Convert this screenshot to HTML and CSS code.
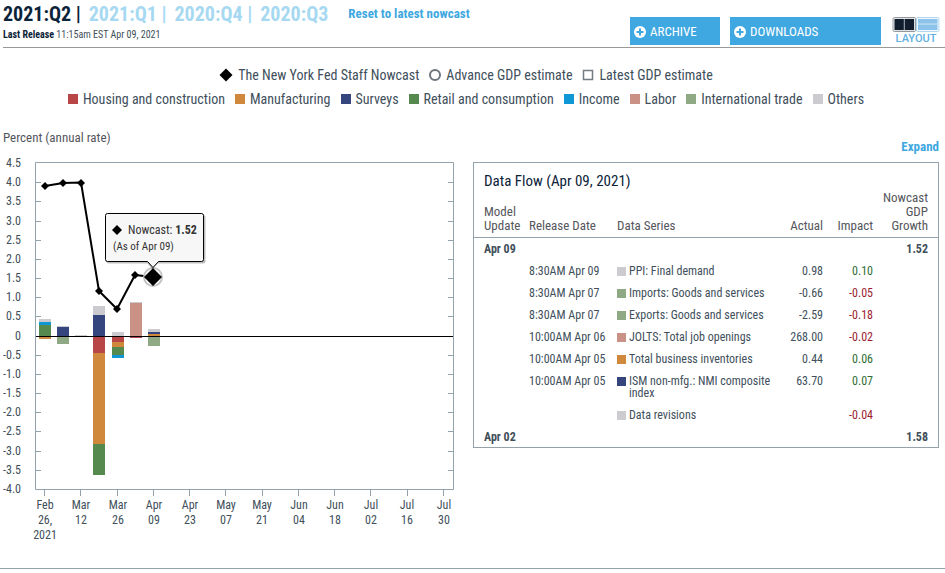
FILE: index.html
```html
<!DOCTYPE html>
<html lang="en">
<head>
<meta charset="utf-8">
<meta name="viewport" content="width=device-width, initial-scale=1">
<title>Nowcasting Report</title>
<link rel="stylesheet" href="styles.css">
</head>
<body>
<main class="report">
  <header class="top">
    <div class="heading">
      <nav class="quarters">
        <a class="quarter current" href="#q2">2021:Q2 |</a>
        <a class="quarter" href="#q1">2021:Q1 |</a>
        <a class="quarter" href="#q4">2020:Q4 |</a>
        <a class="quarter" href="#q3">2020:Q3</a>
        <a class="reset" href="#latest">Reset to latest nowcast</a>
      </nav>
      <p class="release"><strong>Last Release</strong> 11:15am EST Apr 09, 2021</p>
    </div>
    <div class="actions">
      <button class="action archive" type="button">
        <svg class="plus" viewBox="0 0 12 12" aria-hidden="true"><circle cx="6" cy="6" r="6" fill="#fff"/><path d="M6 2.5v7M2.5 6h7" stroke="#40a8e0" stroke-width="2"/></svg>
        ARCHIVE
      </button>
      <button class="action downloads" type="button">
        <svg class="plus" viewBox="0 0 12 12" aria-hidden="true"><circle cx="6" cy="6" r="6" fill="#fff"/><path d="M6 2.5v7M2.5 6h7" stroke="#40a8e0" stroke-width="2"/></svg>
        DOWNLOADS
      </button>
      <button class="layout" type="button">
        <svg class="layout-icon" viewBox="0 0 50 16" aria-hidden="true">
          <rect x=".5" y=".5" width="24" height="15" rx="1.5" fill="#fff" stroke="#8a8f94"/>
          <rect x="2" y="2" width="21" height="12" fill="#121e2d"/>
          <path d="M12.5 2v12" stroke="#b9bfc5"/>
          <rect x="25.5" y=".5" width="24" height="15" rx="1.5" fill="#fff" stroke="#a9d2f0"/>
          <rect x="27" y="2" width="21" height="12" fill="#8cc3eb"/>
          <path d="M27 7.5h21" stroke="#d5e9f8"/>
        </svg>
        LAYOUT
      </button>
    </div>
  </header>

  <div class="legend">
    <ul class="legend-row">
      <li><svg class="mark diamond" viewBox="0 0 14 14" aria-hidden="true"><path d="M7 .5 13.5 7 7 13.5.5 7z"/></svg>The New York Fed Staff Nowcast</li>
      <li><svg class="mark" viewBox="0 0 12 12" aria-hidden="true"><circle cx="6" cy="6" r="5" fill="#fff" stroke="#6d757d" stroke-width="2"/></svg>Advance GDP estimate</li>
      <li><svg class="mark" viewBox="0 0 12 12" aria-hidden="true"><path d="M1.5 1.5h9v9h-9z" fill="#fff" stroke="#737b83" stroke-width="1.5"/></svg>Latest GDP estimate</li>
    </ul>
    <ul class="legend-row">
      <li><span class="swatch housing"></span>Housing and construction</li>
      <li><span class="swatch manufacturing"></span>Manufacturing</li>
      <li><span class="swatch surveys"></span>Surveys</li>
      <li><span class="swatch retail"></span>Retail and consumption</li>
      <li><span class="swatch income"></span>Income</li>
      <li><span class="swatch labor"></span>Labor</li>
      <li><span class="swatch trade"></span>International trade</li>
      <li><span class="swatch others"></span>Others</li>
    </ul>
  </div>

  <div class="panels">
    <section class="chart-panel">
      <p class="axis-title">Percent (annual rate)</p>
      <svg class="chart" viewBox="3 155 452 390" role="img" aria-label="Nowcast by week with contributions">
        <g class="frame">
          <path d="M35.5 162.5h418v327h-418z"/>
          <path d="M36 182.5h5M36 201.5h5M36 221.5h5M36 240.5h5M36 259.5h5M36 278.5h5M36 297.5h5M36 316.5h5M36 355.5h5M36 374.5h5M36 393.5h5M36 412.5h5M36 431.5h5M36 451.5h5M36 470.5h5"/>
          <path d="M448 182.5h5M448 201.5h5M448 221.5h5M448 240.5h5M448 259.5h5M448 278.5h5M448 297.5h5M448 316.5h5M448 355.5h5M448 374.5h5M448 393.5h5M448 412.5h5M448 431.5h5M448 451.5h5M448 470.5h5"/>
          <path d="M44.5 490v6M80.5 490v6M117.5 490v6M153.5 490v6M189.5 490v6M225.5 490v6M262.5 490v6M298.5 490v6M334.5 490v6M370.5 490v6M407.5 490v6M443.5 490v6"/>
        </g>
        <g class="tick-label y">
          <text x="21" y="167">4.5</text><text x="21" y="186">4.0</text><text x="21" y="205">3.5</text><text x="21" y="225">3.0</text><text x="21" y="244">2.5</text><text x="21" y="263">2.0</text><text x="21" y="282">1.5</text><text x="21" y="301">1.0</text><text x="21" y="320">0.5</text><text x="21" y="340">0</text><text x="21" y="359">-0.5</text><text x="21" y="378">-1.0</text><text x="21" y="397">-1.5</text><text x="21" y="416">-2.0</text><text x="21" y="435">-2.5</text><text x="21" y="455">-3.0</text><text x="21" y="474">-3.5</text><text x="21" y="493">-4.0</text>
        </g>
        <g class="tick-label x">
          <text x="45" y="509">Feb</text><text x="45" y="524">26,</text><text x="45" y="539">2021</text>
          <text x="81" y="509">Mar</text><text x="81" y="524">12</text>
          <text x="118" y="509">Mar</text><text x="118" y="524">26</text>
          <text x="154" y="509">Apr</text><text x="154" y="524">09</text>
          <text x="190" y="509">Apr</text><text x="190" y="524">23</text>
          <text x="226" y="509">May</text><text x="226" y="524">07</text>
          <text x="262" y="509">May</text><text x="262" y="524">21</text>
          <text x="299" y="509">Jun</text><text x="299" y="524">04</text>
          <text x="335" y="509">Jun</text><text x="335" y="524">18</text>
          <text x="371" y="509">Jul</text><text x="371" y="524">02</text>
          <text x="407" y="509">Jul</text><text x="407" y="524">16</text>
          <text x="444" y="509">Jul</text><text x="444" y="524">30</text>
        </g>
        <g class="bars">
          <path class="others" d="M39 319h12v3H39zM57 326h12v1H57zM75 335h12v1H75zM93 306h12v9H93zM112 332h12v4h-12zM130 302h12v1h-12zM148 329h12v3h-12z"/>
          <path class="income" d="M39 322h12v3H39zM112 355h12v3h-12z"/>
          <path class="retail" d="M39 325h12v11H39zM93 444h12v31H93zM112 347h12v8h-12z"/>
          <path class="manufacturing" d="M39 336h12v3H39zM93 353h12v91H93zM112 342h12v5h-12zM148 334h12v2h-12z"/>
          <path class="surveys" d="M57 327h12v9H57zM93 315h12v21H93zM148 332h12v2h-12z"/>
          <path class="trade" d="M57 336h12v8H57zM148 336h12v10h-12z"/>
          <path class="housing" d="M93 336h12v17H93zM112 336h12v6h-12zM130 336h12v2h-12z"/>
          <path class="labor" d="M130 303h12v33h-12z"/>
        </g>
        <path class="zero" d="M36 336.5h417"/>
        <path class="nowcast-line" d="M45 186 63 183 81 182.5 99 291 117 309 135 275 153 277"/>
        <circle cx="153" cy="277" r="9" fill="#fff" stroke="#c4c4c4" stroke-width="2"/>
        <path d="M45 182l4 4-4 4-4-4zM63 179l4 4-4 4-4-4zM81 179l4 4-4 4-4-4zM99 287l4 4-4 4-4-4zM117 305l4 4-4 4-4-4zM135 271l4 4-4 4-4-4zM153 268l9 9-9 9-9-9z"/>
        <g class="tooltip">
          <path class="tooltip-shadow" d="M108.5 214.5h94q3 0 3 3v44q0 2-2 2h-46l-5 6-5-6h-39q-2 0-2-2z"/>
          <path class="tooltip-box" d="M107.5 213.5h94q2 0 2 2v44q0 2-2 2h-43l-5.5 6-5.5-6h-40q-2 0-2-2v-44q0-2 2-2z"/>
          <path d="M117 225l5 5-5 5-5-5z"/>
          <text class="tip-value" x="128" y="234">Nowcast: <tspan class="strong">1.52</tspan></text>
          <text class="tip-date" x="113" y="250">(As of Apr 09)</text>
        </g>
      </svg>
    </section>

    <section class="flow-panel">
      <a class="expand" href="#expand">Expand</a>
      <div class="flow">
        <h2>Data Flow (Apr 09, 2021)</h2>
        <table>
          <colgroup><col class="c-update"><col class="c-date"><col><col class="c-num"><col class="c-num"><col class="c-growth"></colgroup>
          <thead>
            <tr><th>Model<br>Update</th><th>Release Date</th><th>Data Series</th><th class="num">Actual</th><th class="num">Impact</th><th class="num">Nowcast<br>GDP<br>Growth</th></tr>
          </thead>
          <tbody>
            <tr class="total"><td>Apr 09</td><td></td><td></td><td></td><td></td><td class="num">1.52</td></tr>
            <tr><td></td><td>8:30AM Apr 09</td><td><div class="series"><span class="swatch others"></span>PPI: Final demand</div></td><td class="num">0.98</td><td class="num up">0.10</td><td></td></tr>
            <tr><td></td><td>8:30AM Apr 07</td><td><div class="series"><span class="swatch trade"></span>Imports: Goods and services</div></td><td class="num">-0.66</td><td class="num down">-0.05</td><td></td></tr>
            <tr><td></td><td>8:30AM Apr 07</td><td><div class="series"><span class="swatch trade"></span>Exports: Goods and services</div></td><td class="num">-2.59</td><td class="num down">-0.18</td><td></td></tr>
            <tr><td></td><td>10:00AM Apr 06</td><td><div class="series"><span class="swatch labor"></span>JOLTS: Total job openings</div></td><td class="num">268.00</td><td class="num down">-0.02</td><td></td></tr>
            <tr><td></td><td>10:00AM Apr 05</td><td><div class="series"><span class="swatch manufacturing"></span>Total business inventories</div></td><td class="num">0.44</td><td class="num up">0.06</td><td></td></tr>
            <tr><td></td><td>10:00AM Apr 05</td><td><div class="series"><span class="swatch surveys"></span>ISM non-mfg.: NMI composite index</div></td><td class="num">63.70</td><td class="num up">0.07</td><td></td></tr>
            <tr><td></td><td></td><td><div class="series"><span class="swatch others"></span>Data revisions</div></td><td></td><td class="num down">-0.04</td><td></td></tr>
            <tr class="total"><td>Apr 02</td><td></td><td></td><td></td><td></td><td class="num">1.58</td></tr>
          </tbody>
        </table>
      </div>
    </section>
  </div>
</main>
</body>
</html>
```
FILE: styles.css
```css
* { box-sizing: border-box; }

body {
  margin: 0;
  background: #fff;
  color: #414f5b;
  font-family: "Roboto Condensed", "Liberation Sans Narrow", Roboto, sans-serif;
  font-size: 12px;
}

a { text-decoration: none; }
p, h2, ul { margin: 0; padding: 0; }
button { font-family: inherit; border: 0; cursor: pointer; }

.report {
  padding: 0 6px 23px 3px;
  border-bottom: 1px solid #94a3ab;
}

.top {
  display: flex;
  justify-content: space-between;
  height: 48px;
  margin-right: -6px;
  padding-right: 4px;
  border-bottom: 1px solid #999;
}

.quarters {
  display: flex;
  gap: 8px;
  padding-top: 2px;
  font-size: 20px;
  font-weight: bold;
  line-height: 24px;
}
.quarter { color: #a6d9f1; }
.quarter.current { color: #0b2338; }
.reset {
  margin-left: 12px;
  color: #40a8e0;
  font-size: 13px;
}
.release { font-size: 10px; line-height: 17px; }
.release strong { color: #0b2338; }

.actions {
  display: flex;
  gap: 10px;
  padding-top: 17px;
}
.action {
  display: flex;
  align-items: center;
  gap: 4px;
  height: 28px;
  padding: 1px 4px 0;
  background: #40a8e0;
  color: #fff;
  font-size: 13px;
}
.archive { width: 90px; }
.downloads { width: 151px; }
.plus { width: 12px; height: 12px; }
.layout {
  display: flex;
  flex-direction: column;
  align-items: center;
  height: 28px;
  padding: 0;
  background: none;
  color: #62b0e2;
  font-family: Roboto, sans-serif;
  font-size: 11px;
  font-weight: 500;
  line-height: 13px;
}
.layout-icon { width: 50px; height: 16px; }

.legend {
  padding-top: 15px;
  font-size: 14px;
  line-height: 24px;
}
.legend-row {
  display: flex;
  flex-wrap: wrap;
  justify-content: center;
  list-style: none;
}
.legend-row li {
  display: flex;
  align-items: center;
  gap: 5px;
  margin-right: 10px;
}
.mark { width: 12px; height: 12px; }
.mark.diamond { width: 14px; height: 14px; }
.swatch { flex: none; width: 10px; height: 10px; }

.housing { background: #b94647; fill: #b94647; }
.manufacturing { background: #d0883d; fill: #d0883d; }
.surveys { background: #35467f; fill: #35467f; }
.retail { background: #56894d; fill: #56894d; }
.income { background: #1097d5; fill: #1097d5; }
.labor { background: #ca9186; fill: #ca9186; }
.trade { background: #8fa985; fill: #8fa985; }
.others { background: #cccbd0; fill: #cccbd0; }

.panels {
  display: grid;
  grid-template-columns: 452fr 466fr;
  gap: 18px;
  padding-top: 19px;
}
.axis-title {
  color: #55565c;
  font-size: 13px;
  line-height: 16px;
  padding-bottom: 9px;
}
.chart { display: block; width: 100%; }
.frame { fill: none; stroke: #94a3ab; }
.tick-label { fill: #414f5b; font-size: 12px; }
.y { text-anchor: end; }
.x { text-anchor: middle; }
.zero { stroke: #000; }
.nowcast-line { fill: none; stroke: #000; stroke-width: 2; stroke-linejoin: round; }
.tooltip-shadow { fill: #000; opacity: .25; }
.tooltip-box { fill: #f7f7f7; stroke: #000; }
.tooltip text { fill: #333; }
.tip-value { font-size: 12px; }
.tip-date { font-size: 11px; }
.strong { font-weight: bold; }

.flow-panel { padding-top: 9px; }
.expand {
  display: block;
  color: #40a8e0;
  font-size: 13px;
  font-weight: bold;
  line-height: 16px;
  text-align: right;
}
.flow {
  margin-top: 7px;
  border: 1px solid #94a3ab;
}
.flow h2 {
  padding: 10px 10px 2px;
  color: #0b2338;
  font-size: 15px;
  font-weight: normal;
  line-height: 16px;
}
table {
  width: 100%;
  table-layout: fixed;
  border-collapse: collapse;
}
.c-update { width: 55px; }
.c-date { width: 88px; }
.c-num { width: 50px; }
.c-growth { width: 65px; }
th, td {
  padding: 5px 0;
  line-height: 12px;
  text-align: left;
  vertical-align: top;
}
th {
  padding: 0 0 4px;
  border-bottom: 1px solid #94a3ab;
  color: #55565c;
  font-size: 13px;
  font-weight: normal;
  line-height: 14px;
  vertical-align: bottom;
}
th:first-child, td:first-child { padding-left: 10px; }
th:last-child, td:last-child { padding-right: 10px; }
th.num, td.num { text-align: right; }
.total { font-weight: bold; }
tr:last-child td { padding-bottom: 4px; }
.series { display: flex; gap: 3px; }
.series .swatch { width: 9px; height: 9px; margin-top: 2px; }
.up { color: #2f6b35; }
.down { color: #9b1c31; }
```
